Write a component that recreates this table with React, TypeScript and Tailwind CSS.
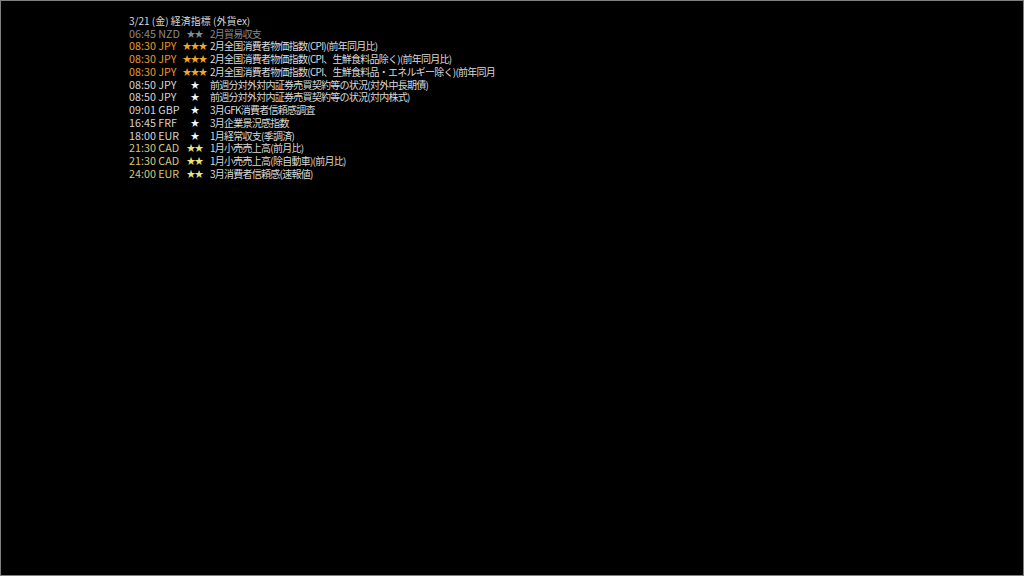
import React from "react";

interface Row {
  time: string;
  ccy: string;
  stars: number;
  title: string;
  tone: "gray" | "orange" | "white" | "yellow";
}

const rows: Row[] = [
  { time: "06:45", ccy: "NZD", stars: 2, title: "2月貿易収支", tone: "gray" },
  { time: "08:30", ccy: "JPY", stars: 3, title: "2月全国消費者物価指数(CPI)(前年同月比)", tone: "orange" },
  { time: "08:30", ccy: "JPY", stars: 3, title: "2月全国消費者物価指数(CPI、生鮮食料品除く)(前年同月比)", tone: "orange" },
  { time: "08:30", ccy: "JPY", stars: 3, title: "2月全国消費者物価指数(CPI、生鮮食料品・エネルギー除く)(前年同月", tone: "orange" },
  { time: "08:50", ccy: "JPY", stars: 1, title: "前週分対外対内証券売買契約等の状況(対外中長期債)", tone: "white" },
  { time: "08:50", ccy: "JPY", stars: 1, title: "前週分対外対内証券売買契約等の状況(対内株式)", tone: "white" },
  { time: "09:01", ccy: "GBP", stars: 1, title: "3月GFK消費者信頼感調査", tone: "white" },
  { time: "16:45", ccy: "FRF", stars: 1, title: "3月企業景況感指数", tone: "white" },
  { time: "18:00", ccy: "EUR", stars: 1, title: "1月経常収支(季調済)", tone: "white" },
  { time: "21:30", ccy: "CAD", stars: 2, title: "1月小売売上高(前月比)", tone: "yellow" },
  { time: "21:30", ccy: "CAD", stars: 2, title: "1月小売売上高(除自動車)(前月比)", tone: "yellow" },
  { time: "24:00", ccy: "EUR", stars: 2, title: "3月消費者信頼感(速報値)", tone: "yellow" },
];

const toneText = {
  gray: "text-[#8a8a8a]",
  orange: "text-[#e39a2d]",
  white: "text-[#d4d4d4]",
  yellow: "text-[#d6c77a]",
};

const toneStar = {
  gray: "text-[#8a8a8a]",
  orange: "text-[#f5a623]",
  white: "text-[#f4f4f4]",
  yellow: "text-[#eee27a]",
};

export default function App() {
  return (
    <div className="w-[1024px] h-[576px] bg-black border border-[#808080] overflow-hidden font-['Noto_Sans_CJK_JP','Liberation_Sans',sans-serif]">
      <div className="pl-[128px] pt-[13.5px]">
        <div className="h-[12.75px] flex items-center text-[10px] leading-[12px] text-[#d8d8d8] whitespace-pre">
          {"3/21 (金) 経済指標 (外貨ex)"}
        </div>
        {rows.map((r, i) => (
          <div key={i} className="h-[12.75px] flex items-center whitespace-nowrap">
            <span className={`w-[51px] text-[10.75px] leading-[12px] ${toneText[r.tone]}`}>
              {r.time} {r.ccy}
            </span>
            <span className={`w-[29px] flex justify-center text-[9px] leading-[10px] ${toneStar[r.tone]}`}>
              {Array.from({ length: r.stars }).map((_, k) => (
                <span key={k} className="w-[8px] text-center">★</span>
              ))}
            </span>
            <span
              className={`pl-[1px] text-[10px] leading-[12px] tracking-[-0.75px] ${r.tone === "gray" ? "text-[#8a8a8a]" : "text-[#dadada]"}`}
            >
              {r.title}
            </span>
          </div>
        ))}
      </div>
    </div>
  );
}
